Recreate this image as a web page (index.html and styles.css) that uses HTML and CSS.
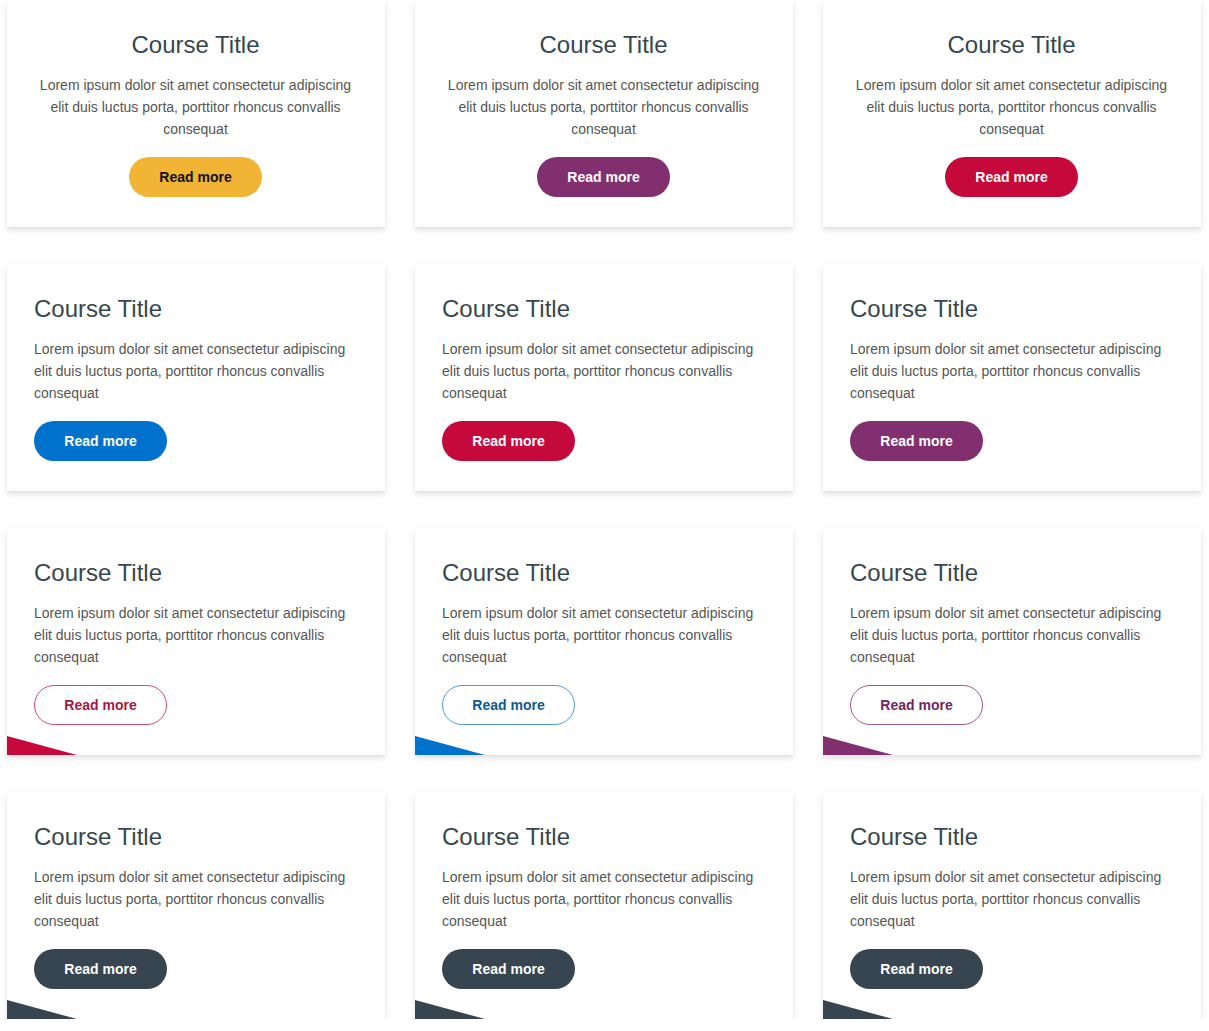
FILE: index.html
```html
<!DOCTYPE html>
<html lang="en">
<head>
    <meta charset="UTF-8">
    <meta name="viewport" content="width=device-width, initial-scale=1.0">
    <title>Course Cards</title>
    <link rel="stylesheet" href="styles.css">
</head>
<body>
    <div class="cards">
        <!-- centered cards -->
        <div class="card card-center">
            <h3>Course Title</h3>
            <p>Lorem ipsum dolor sit amet consectetur adipiscing elit duis luctus porta, porttitor rhoncus convallis consequat</p>
            <a class="btn btn-yellow" href="#">Read more</a>
        </div>
        <div class="card card-center">
            <h3>Course Title</h3>
            <p>Lorem ipsum dolor sit amet consectetur adipiscing elit duis luctus porta, porttitor rhoncus convallis consequat</p>
            <a class="btn btn-purple" href="#">Read more</a>
        </div>
        <div class="card card-center">
            <h3>Course Title</h3>
            <p>Lorem ipsum dolor sit amet consectetur adipiscing elit duis luctus porta, porttitor rhoncus convallis consequat</p>
            <a class="btn btn-red" href="#">Read more</a>
        </div>

        <!-- left aligned cards -->
        <div class="card">
            <h3>Course Title</h3>
            <p>Lorem ipsum dolor sit amet consectetur adipiscing elit duis luctus porta, porttitor rhoncus convallis consequat</p>
            <a class="btn btn-blue" href="#">Read more</a>
        </div>
        <div class="card">
            <h3>Course Title</h3>
            <p>Lorem ipsum dolor sit amet consectetur adipiscing elit duis luctus porta, porttitor rhoncus convallis consequat</p>
            <a class="btn btn-red" href="#">Read more</a>
        </div>
        <div class="card">
            <h3>Course Title</h3>
            <p>Lorem ipsum dolor sit amet consectetur adipiscing elit duis luctus porta, porttitor rhoncus convallis consequat</p>
            <a class="btn btn-purple" href="#">Read more</a>
        </div>

        <!-- outline buttons with corner -->
        <div class="card corner corner-red">
            <h3>Course Title</h3>
            <p>Lorem ipsum dolor sit amet consectetur adipiscing elit duis luctus porta, porttitor rhoncus convallis consequat</p>
            <a class="btn btn-outline-red" href="#">Read more</a>
        </div>
        <div class="card corner corner-blue">
            <h3>Course Title</h3>
            <p>Lorem ipsum dolor sit amet consectetur adipiscing elit duis luctus porta, porttitor rhoncus convallis consequat</p>
            <a class="btn btn-outline-blue" href="#">Read more</a>
        </div>
        <div class="card corner corner-purple">
            <h3>Course Title</h3>
            <p>Lorem ipsum dolor sit amet consectetur adipiscing elit duis luctus porta, porttitor rhoncus convallis consequat</p>
            <a class="btn btn-outline-purple" href="#">Read more</a>
        </div>

        <!-- dark -->
        <div class="card corner corner-dark">
            <h3>Course Title</h3>
            <p>Lorem ipsum dolor sit amet consectetur adipiscing elit duis luctus porta, porttitor rhoncus convallis consequat</p>
            <a class="btn btn-dark" href="#">Read more</a>
        </div>
        <div class="card corner corner-dark">
            <h3>Course Title</h3>
            <p>Lorem ipsum dolor sit amet consectetur adipiscing elit duis luctus porta, porttitor rhoncus convallis consequat</p>
            <a class="btn btn-dark" href="#">Read more</a>
        </div>
        <div class="card corner corner-dark">
            <h3>Course Title</h3>
            <p>Lorem ipsum dolor sit amet consectetur adipiscing elit duis luctus porta, porttitor rhoncus convallis consequat</p>
            <a class="btn btn-dark" href="#">Read more</a>
        </div>
    </div>
</body>
</html>
```

FILE: styles.css
```css
body {
    font-family: "Liberation Sans", Arial, sans-serif;
    margin: 0;
    padding: 0;
    background-color: #fff;
}

.cards {
    display: grid;
    grid-template-columns: repeat(3, 1fr);
    column-gap: 30px;
    row-gap: 37px;
    padding: 0 8px 0 7px;
}

.card {
    position: relative;
    background-color: #fff;
    box-shadow: 0 3px 6px rgba(0, 0, 0, 0.13);
    padding: 30px 28px 30px 27px;
    height: 227px;
    box-sizing: border-box;
}

.card-center {
    text-align: center;
}

.card h3 {
    margin: 0;
    font-size: 24px;
    font-weight: normal;
    line-height: 29px;
    color: #36474f;
}

.card p {
    margin: 15px 0 17px 0;
    font-size: 14px;
    line-height: 22px;
    color: #555;
}

.btn {
    display: inline-block;
    box-sizing: border-box;
    width: 133px;
    height: 40px;
    line-height: 40px;
    border-radius: 20px;
    text-align: center;
    font-size: 14px;
    font-weight: bold;
    text-decoration: none;
    color: white;
}

.btn-yellow { background-color: #f1b434; color: #111; }
.btn-purple { background-color: #822f70; }
.btn-red { background-color: #c5093b; }
.btn-blue { background-color: #0072ce; }
.btn-dark { background-color: #36454f; }

.btn-outline-red,
.btn-outline-blue,
.btn-outline-purple {
    line-height: 38px;
    background-color: #fff;
}

.btn-outline-red { border: 1px solid #d54a6c; color: #a4193f; }
.btn-outline-blue { border: 1px solid #4b9ae0; color: #0b5a93; }
.btn-outline-purple { border: 1px solid #9b5a8c; color: #6f2663; }

/* little triangle in the bottom left corner */
.corner::after {
    content: "";
    position: absolute;
    left: 0;
    bottom: 0;
    width: 70px;
    height: 19px;
    clip-path: polygon(0 0, 100% 100%, 0 100%);
}

.corner-red::after { background-color: #c5093b; }
.corner-blue::after { background-color: #0072ce; }
.corner-purple::after { background-color: #822f70; }
.corner-dark::after { background-color: #36454f; }
```
